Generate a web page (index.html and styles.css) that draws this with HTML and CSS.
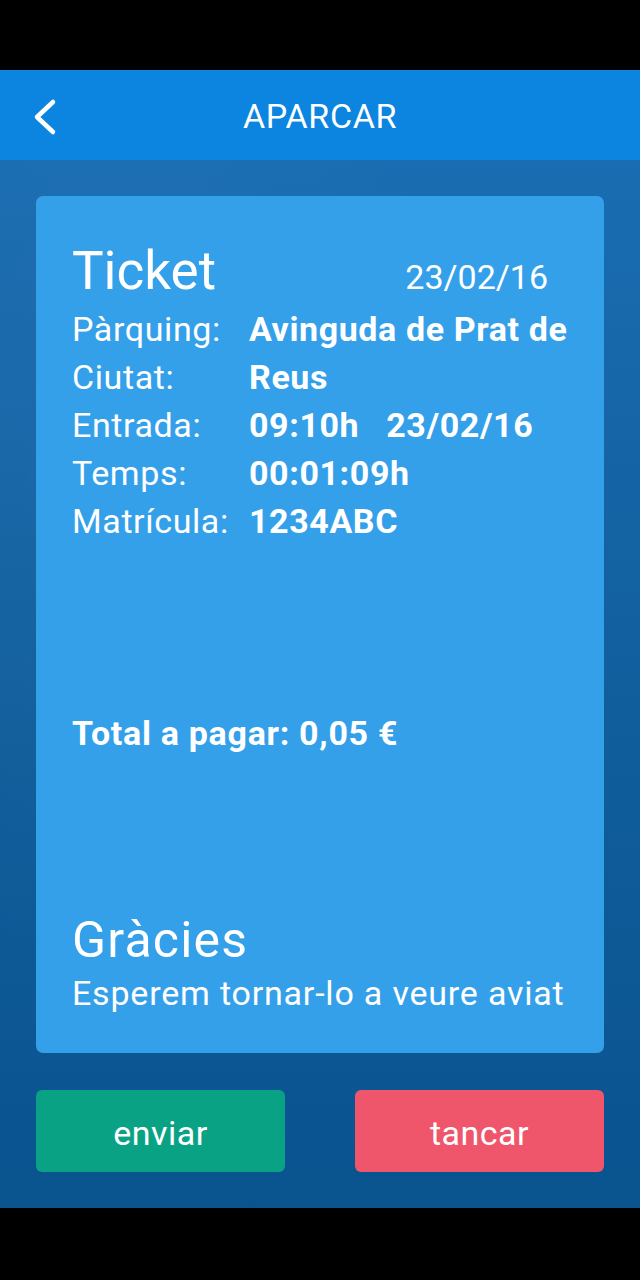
FILE: index.html
```html
<!DOCTYPE html>
<html lang="ca">
<head>
<meta charset="utf-8">
<title>Aparcar</title>
<link rel="stylesheet" href="styles.css">
</head>
<body>
<div class="app">
  <div class="statusbar"></div>
  <header class="topbar">
    <button class="back" aria-label="Enrere">
      <svg width="28" height="38" viewBox="0 0 28 38"><path d="M22 4 L6 19 L22 34" fill="none" stroke="#fff" stroke-width="4.5" stroke-linecap="round" stroke-linejoin="round"/></svg>
    </button>
    <h1 class="title">APARCAR</h1>
  </header>
  <main class="content">
    <section class="card">
      <div class="card-head">
        <span class="ticket">Ticket</span>
        <span class="date">23/02/16</span>
      </div>
      <dl class="info">
        <div class="row"><dt>Pàrquing:</dt><dd>Avinguda de Prat de</dd></div>
        <div class="row"><dt>Ciutat:</dt><dd>Reus</dd></div>
        <div class="row"><dt>Entrada:</dt><dd>09:10h<span class="gap"></span>23/02/16</dd></div>
        <div class="row"><dt>Temps:</dt><dd>00:01:09h</dd></div>
        <div class="row"><dt>Matrícula:</dt><dd>1234ABC</dd></div>
      </dl>
      <p class="total">Total a pagar: 0,05 €</p>
      <div class="thanks">
        <p class="thanks-title">Gràcies</p>
        <p class="thanks-text">Esperem tornar-lo a veure aviat</p>
      </div>
    </section>
    <div class="actions">
      <button class="btn btn-send">enviar</button>
      <button class="btn btn-close">tancar</button>
    </div>
  </main>
  <div class="navbar"></div>
</div>
</body>
</html>
```

FILE: styles.css
```css
* { box-sizing: border-box; }
html, body { margin: 0; padding: 0; background: #000; }
body {
  font-family: Roboto, "Noto Sans", "Liberation Sans", sans-serif;
  color: #fff;
}
.app {
  width: 640px;
  height: 1280px;
  display: flex;
  flex-direction: column;
}
.statusbar { height: 70px; background: #000; flex: none; }
.topbar {
  height: 90px;
  flex: none;
  background: #0b85df;
  display: flex;
  align-items: center;
  justify-content: center;
  position: relative;
}
.back {
  position: absolute;
  left: 28px;
  top: 27px;
  width: 34px;
  height: 40px;
  padding: 0;
  border: 0;
  background: none;
  display: flex;
  align-items: center;
  justify-content: center;
}
.title {
  margin: 2px 0 0;
  font-size: 34px;
  font-weight: 400;
  letter-spacing: 0.6px;
  line-height: 40px;
}
.content {
  flex: 1;
  background:
    radial-gradient(ellipse at 20% 30%, rgba(255,255,255,0.03), transparent 50%),
    linear-gradient(180deg, #1a6db2 0%, #12609f 45%, #09538f 100%);
  padding: 36px 36px 36px;
  display: flex;
  flex-direction: column;
  gap: 37px;
}
.card {
  flex: none;
  height: 857px;
  background: #35a0ea;
  border-radius: 7px;
  padding: 45px 36px 0 36px;
  display: flex;
  flex-direction: column;
}
.card > * { flex: none; }
.card-head {
  display: flex;
  align-items: baseline;
  justify-content: space-between;
  padding-right: 20px;
  height: 62px;
}
.ticket { font-size: 53px; line-height: 60px; }
.date { font-size: 34px; line-height: 40px; }
.info { margin: 2px 0 0; }
.row {
  display: flex;
  font-size: 34px;
  letter-spacing: 0.6px;
  line-height: 48px;
}
.row dt { width: 177px; flex: none; }
.row dd { margin: 0; font-weight: 700; white-space: nowrap; }
.gap { display: inline-block; width: 27px; }
.total {
  margin: 166px 0 0;
  font-size: 34px;
  letter-spacing: 0.7px;
  font-weight: 700;
  line-height: 44px;
}
.thanks { margin-top: 155px; }
.thanks p { margin: 0; }
.thanks-title { font-size: 50px; letter-spacing: 1.2px; line-height: 60px; }
.thanks-text { font-size: 34px; letter-spacing: 0.8px; line-height: 46px; margin-top: 15px; }
.actions {
  flex: none;
  display: flex;
  justify-content: space-between;
  height: 82px;
}
.btn {
  width: 249px;
  height: 82px;
  border: 0;
  border-radius: 6px;
  color: #fff;
  font-family: inherit;
  font-size: 34px;
  letter-spacing: 0.5px;
  padding: 4px 0 0;
}
.btn-send { background: #0aa285; }
.btn-close { background: #ef556b; }
.navbar { height: 72px; background: #000; flex: none; }
```
